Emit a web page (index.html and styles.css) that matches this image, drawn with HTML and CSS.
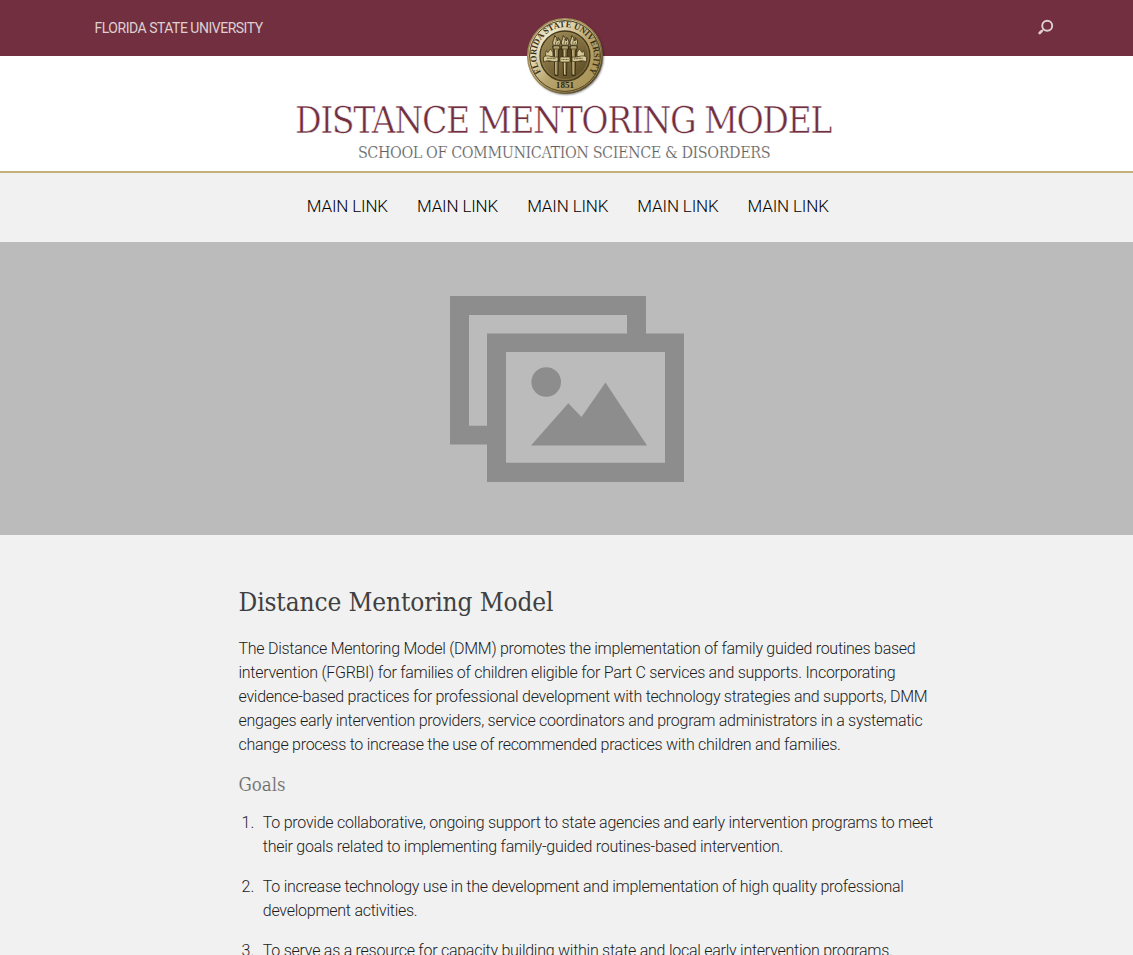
FILE: index.html
```html
<!DOCTYPE html>
<html lang="en">
<head>
<meta charset="utf-8">
<title>Distance Mentoring Model</title>
<link rel="stylesheet" href="styles.css">
</head>
<body>
<header class="topbar">
  <a class="university">FLORIDA STATE UNIVERSITY</a>
  <svg class="search" viewBox="0 0 18 18" width="18" height="18" aria-label="Search"><circle cx="10.2" cy="6.7" r="5" fill="none" stroke="currentColor" stroke-width="1.9"/><path d="M4.6 12.1 2.7 14" stroke="currentColor" stroke-width="2.7" stroke-linecap="round"/><path d="M7.2 9.7 5 11.8" stroke="currentColor" stroke-width="1.2"/></svg>
  <svg class="seal" viewBox="0 0 80 80" width="80" height="80" aria-label="Florida State University seal">
    <defs>
      <linearGradient id="rim" x1="0" y1="0" x2="1" y2="1"><stop offset="0" stop-color="#9a8656"/><stop offset=".45" stop-color="#a8935a"/><stop offset="1" stop-color="#3b2f18"/></linearGradient>
      <linearGradient id="band" x1="0" y1="0" x2="1" y2="1"><stop offset="0" stop-color="#c9bd92"/><stop offset=".25" stop-color="#ece3c2"/><stop offset=".55" stop-color="#b7a46c"/><stop offset="1" stop-color="#a28c4e"/></linearGradient>
      <linearGradient id="disc" x1="0" y1="0" x2=".7" y2="1"><stop offset="0" stop-color="#a5925c"/><stop offset="1" stop-color="#5f4d26"/></linearGradient>
      <path id="arc" d="M16.1 56.1A28.8 28.8 0 1 1 63.9 56.1"/>
      <g id="torch">
        <path d="M-3.8-4H3.8L3.3-.5H2.2L1.5 25.5H-1.5L-2.2-.5H-3.3Z" fill="#8f7d4c" stroke="#30260f" stroke-width=".9"/>
        <path d="M-2.6-3H2.6M-.7 0-.5 24" stroke="#d8cd9e" stroke-width=".9"/>
        <path d="M-3-4.8C-5-8-2-10-1.8-14.5 1-12 .3-10 1.3-9 2-10 2-11 1.7-12.5 5-9 4-6.5 3-4.8Z" fill="#d2c796" stroke="#382c15" stroke-width=".9"/>
        <path d="M-.8-5.5C-1.5-8 .5-8-.4-11M1.2-5.5 2-8" fill="none" stroke="#4f4021" stroke-width=".7"/>
      </g>
    </defs>
    <circle class="shadow" cx="40" cy="40" r="37.5"/>
    <circle cx="40" cy="40" r="37.2" fill="url(#band)" stroke="url(#rim)" stroke-width="1.6"/>
    <circle cx="40" cy="40" r="35.4" fill="none" stroke="#4b3d20" stroke-width="1"/>
    <circle cx="40" cy="40" r="25" fill="url(#disc)" stroke="#45391d" stroke-width="1.3"/>
    <circle cx="40" cy="40" r="23.5" fill="none" stroke="#9b8753" stroke-width=".6"/>
    <text class="seal-name"><textPath href="#arc" textLength="124" lengthAdjust="spacingAndGlyphs">FLORIDA STATE UNIVERSITY</textPath></text>
    <text class="seal-year" x="40" y="71.8">1851</text>
    <path d="M20 40 21 34 23 36 25.5 32.5 28 36V32H52V36L54.5 32.5 57 36 59 34 60 40 57 46H23Z" fill="#554523"/>
    <path d="M21 40 21.3 35.5 23 37 25.5 33.5 27.5 36.5V40ZM59 40 58.7 35.5 57 37 54.5 33.5 52.5 36.5V40Z" fill="#d5ca9a"/>
    <use href="#torch" x="31.4" y="34"/><use href="#torch" x="48.6" y="34"/><use href="#torch" x="40" y="34"/>
    <path d="M18.5 41C24 38 26 42 33 41V45C28 47 24 43 18.5 46ZM35 41H45V46H35ZM47 41C54 42 56 38 61.5 41V46C56 43 52 47 47 45Z" fill="#d5ca9a" stroke="#493b1d" stroke-width=".8"/>
    <path d="M22 42.5Q26 42 31 43M36.5 43.5H43.5M49 43Q54 42 58 42.5" fill="none" stroke="#6d5e35" stroke-width="1.2" stroke-dasharray="1 .5"/>
  </svg>
</header>
<div class="masthead">
  <div class="site-title">DISTANCE MENTORING MODEL</div>
  <div class="site-sub">SCHOOL OF COMMUNICATION SCIENCE &amp; DISORDERS</div>
</div>
<nav class="nav"><a>MAIN LINK</a><a>MAIN LINK</a><a>MAIN LINK</a><a>MAIN LINK</a><a>MAIN LINK</a></nav>
<div class="hero">
  <svg viewBox="450 296 234 186" width="234" height="186" aria-hidden="true"><g fill="#8d8d8d"><path d="M450 296H646V333.4H684V482H487V444.5H450ZM469 315V425.7H487V333.4H627V315ZM506 352V462.7H665V352Z" fill-rule="evenodd"/><circle cx="546.2" cy="382" r="14.8"/><path d="M531 445.6 568.3 403.3 581.5 417 605.5 382.5 647 445.6Z"/></g></svg>
</div>
<main class="content">
  <h1>Distance Mentoring Model</h1>
  <p>The Distance Mentoring Model (DMM) promotes the implementation of family guided routines based<br>intervention (FGRBI) for families of children eligible for Part C services and supports. Incorporating<br>evidence-based practices for professional development with technology strategies and supports, DMM<br>engages early intervention providers, service coordinators and program administrators in a systematic<br>change process to increase the use of recommended practices with children and families.</p>
  <h2>Goals</h2>
  <ol>
    <li><span>To provide collaborative, ongoing support to state agencies and early intervention programs to meet<br>their goals related to implementing family-guided routines-based intervention.</span></li>
    <li><span>To increase technology use in the development and implementation of high quality professional<br>development activities.</span></li>
    <li><span>To serve as a resource for capacity building within state and local early intervention programs.</span></li>
  </ol>
</main>
</body>
</html>
```
FILE: styles.css
```css
*, *::before { box-sizing: border-box; }
html, body { height: 100%; }
body {
  margin: 0;
  overflow: hidden;
  background: #f1f1f1;
  color: #1c1c1c;
  font: 300 16px/24px Roboto, "Open Sans", sans-serif;
}
.topbar {
  position: relative;
  display: flex;
  justify-content: space-between;
  align-items: center;
  height: 56px;
  padding: 0 78px 0 94.5px;
  background: #722f3f;
  color: #dfcfd2;
}
.university { font-size: 14px; font-weight: 400; letter-spacing: -0.49px; }
.search { color: #dfcfd2; }
.seal { position: absolute; left: 525px; top: 16px; overflow: visible; }
.shadow { fill: #443a20; filter: drop-shadow(1px 1.5px 1px rgba(0, 0, 0, .6)); }
.seal-name { font: 700 8.8px "Liberation Serif", serif; fill: #3a2f17; }
.seal-year { font: 700 9.2px "Liberation Serif", serif; fill: #30260f; text-anchor: middle; }
.masthead {
  height: 117px;
  padding-top: 42px;
  background: #fff;
  border-bottom: 2px solid #c5b078;
  text-align: center;
  white-space: nowrap;
  font-family: "Roboto Slab", "DejaVu Serif Condensed", "DejaVu Serif", serif;
  font-stretch: condensed;
}
.site-title {
  height: 44px;
  padding-right: 7px;
  line-height: 46px;
  font-size: 37px;
  color: #722f3f;
  letter-spacing: -1.52px;
  -webkit-text-stroke: .5px #fff;
}
.site-sub {
  padding-right: 5px;
  line-height: 22px;
  font-size: 16px;
  color: #606060;
  letter-spacing: -0.43px;
  -webkit-text-stroke: .2px #fff;
}
.nav {
  display: flex;
  justify-content: center;
  gap: 29px;
  height: 69px;
  padding: 21px 0 0 2.5px;
  font-size: 17px;
  letter-spacing: -0.15px;
  color: #000;
}
.hero {
  display: flex;
  justify-content: center;
  align-items: center;
  height: 293px;
  background: #bbb;
}
.hero svg { margin-top: 1px; }
.content { padding: 49px 0 0 238.5px; white-space: nowrap; letter-spacing: -0.27px; }
h1, h2 {
  margin: 0;
  font-family: "Roboto Slab", "DejaVu Serif Condensed", "DejaVu Serif", serif;
  font-stretch: condensed;
  font-weight: 400;
}
h1 { font-size: 26px; line-height: 37px; letter-spacing: -0.12px; color: #404040; }
p { margin: 16px 0; }
h2 { font-size: 18.5px; line-height: 24px; letter-spacing: 0; color: #666; -webkit-text-stroke: .2px #f1f1f1; }
ol { margin: 14px 0 0; padding: 0; list-style: none; counter-reset: goal; letter-spacing: -0.255px; }
li { display: flex; margin-bottom: 16px; counter-increment: goal; }
li::before { content: counter(goal) "."; width: 24.3px; padding-right: 8.5px; text-align: right; letter-spacing: 0; }
```
